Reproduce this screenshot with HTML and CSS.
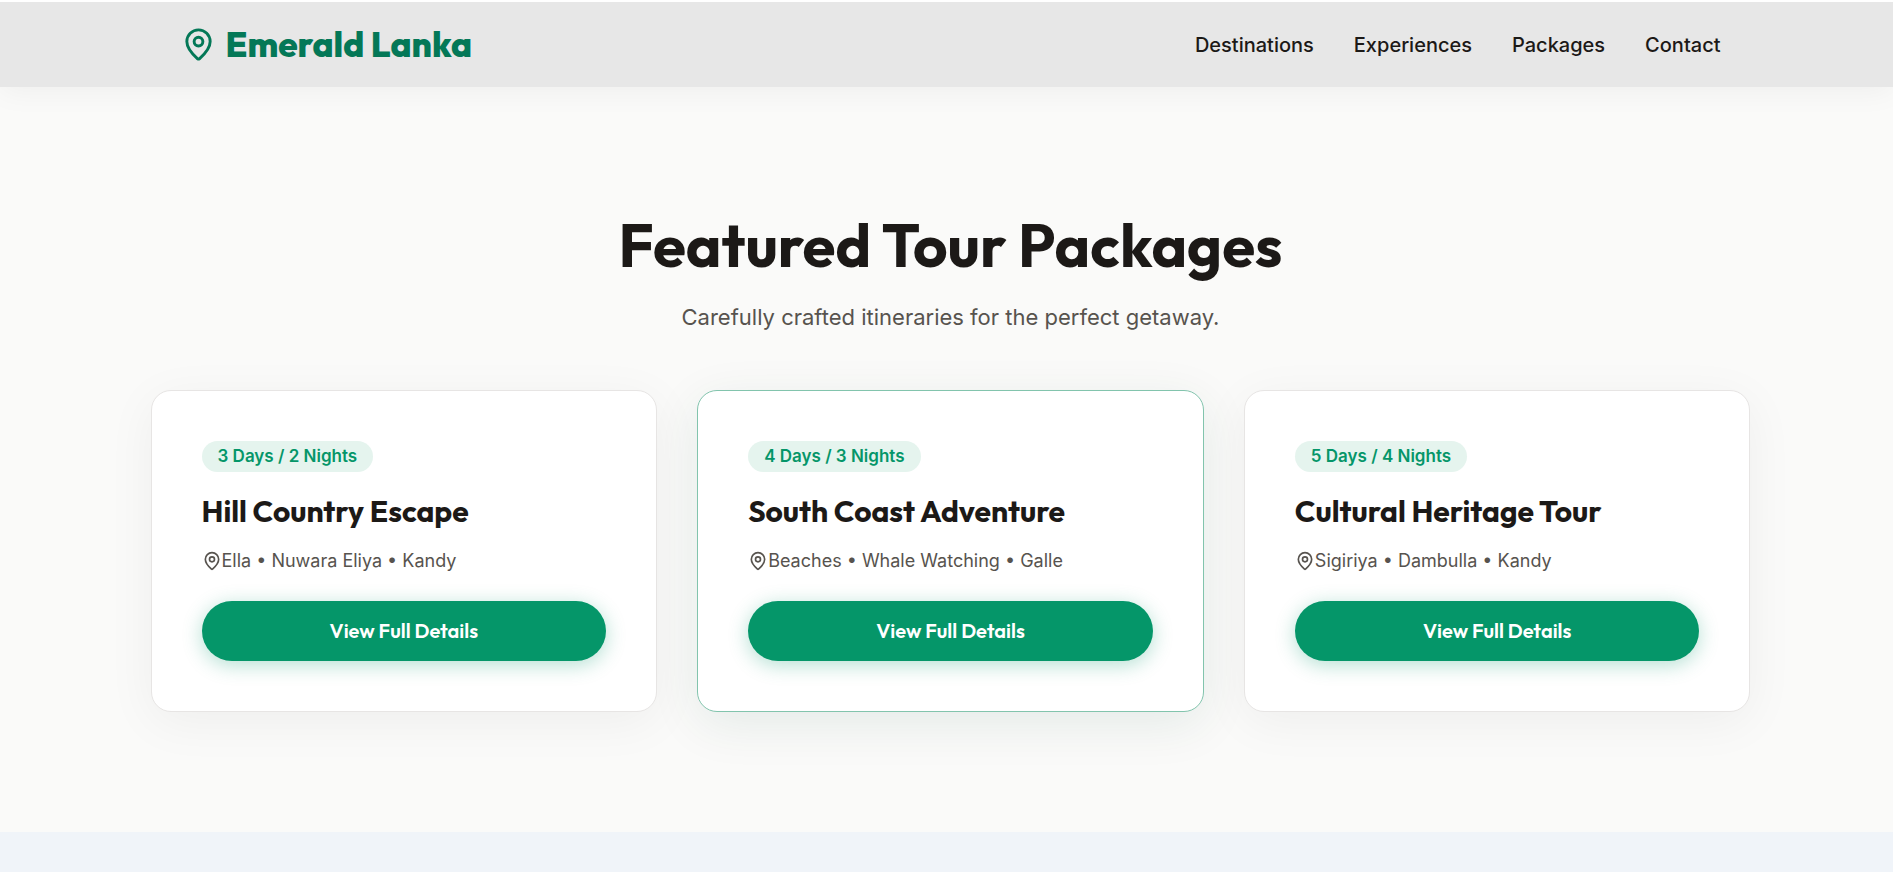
FILE: index.html
```
<!DOCTYPE html>
<html lang="en">
<head>
  <meta charset="UTF-8">
  <meta name="viewport" content="width=device-width, initial-scale=1.0">
  <title>Emerald Lanka</title>
  <link rel="stylesheet" href="styles.css">
</head>
<body>
  <svg class="sprite" aria-hidden="true">
    <symbol id="map-pin" viewBox="0 0 24 24">
      <path d="M20 10c0 4.993-5.539 10.193-7.399 11.799a1 1 0 0 1-1.202 0C9.539 20.193 4 14.993 4 10a8 8 0 0 1 16 0"/>
      <circle cx="12" cy="10" r="3"/>
    </symbol>
  </svg>

  <header class="navbar">
    <div class="container nav-container">
      <a href="#" class="logo">
        <svg class="icon logo-icon" aria-hidden="true"><use href="#map-pin"/></svg>
        <span>Emerald Lanka</span>
      </a>
      <nav class="nav-links">
        <a href="#destinations">Destinations</a>
        <a href="#experiences">Experiences</a>
        <a href="#packages">Packages</a>
        <a href="#contact">Contact</a>
      </nav>
    </div>
  </header>

  <main>
    <section class="section" id="packages">
      <div class="container">
        <div class="section-header">
          <h2>Featured Tour Packages</h2>
          <p>Carefully crafted itineraries for the perfect getaway.</p>
        </div>

        <div class="package-grid">
          <article class="package-card">
            <span class="badge">3 Days / 2 Nights</span>
            <h3>Hill Country Escape</h3>
            <p class="route"><svg class="icon" aria-hidden="true"><use href="#map-pin"/></svg>Ella • Nuwara Eliya • Kandy</p>
            <button type="button" class="btn">View Full Details</button>
          </article>

          <article class="package-card popular">
            <span class="badge">4 Days / 3 Nights</span>
            <h3>South Coast Adventure</h3>
            <p class="route"><svg class="icon" aria-hidden="true"><use href="#map-pin"/></svg>Beaches • Whale Watching • Galle</p>
            <button type="button" class="btn">View Full Details</button>
          </article>

          <article class="package-card">
            <span class="badge">5 Days / 4 Nights</span>
            <h3>Cultural Heritage Tour</h3>
            <p class="route"><svg class="icon" aria-hidden="true"><use href="#map-pin"/></svg>Sigiriya • Dambulla • Kandy</p>
            <button type="button" class="btn">View Full Details</button>
          </article>
        </div>
      </div>
    </section>

    <section class="section-alt" id="contact"></section>
  </main>
</body>
</html>
```

FILE: styles.css
```
:root {
  --primary: #059669;
  --primary-dark: #047857;
  --text: #1c1917;
  --text-light: #57534e;
  --bg: #fafaf9;
  --bg-alt: #f0f4f9;
  --font-heading: "Outfit", "Lato", sans-serif;
  --font-body: "Inter", sans-serif;
}

* {
  box-sizing: border-box;
  margin: 0;
  padding: 0;
}

body {
  display: flex;
  flex-direction: column;
  min-height: 100vh;
  background-color: var(--bg);
  color: var(--text);
  font-family: var(--font-body);
  line-height: 1.6;
}

main {
  display: flex;
  flex: 1;
  flex-direction: column;
}

a {
  color: inherit;
  text-decoration: none;
}

.sprite {
  display: none;
}

.container {
  max-width: 1600px;
  margin: 0 auto;
}

.icon {
  width: 20px;
  height: 20px;
  flex-shrink: 0;
  fill: none;
  stroke: currentColor;
  stroke-width: 2;
  stroke-linecap: round;
  stroke-linejoin: round;
}

/* Navbar */
.navbar {
  padding-left: 8px;
  background-color: #e7e7e7;
  border-top: 2px solid #fff;
  box-shadow: 0 4px 30px rgba(0, 0, 0, 0.05);
}

.nav-container {
  display: flex;
  justify-content: space-between;
  align-items: center;
  padding: 14px 30px;
}

.logo {
  display: flex;
  align-items: center;
  gap: 10px;
  color: var(--primary-dark);
  font-family: var(--font-heading);
  font-size: 35px;
  font-weight: 800;
  line-height: 57px;
}

.logo-icon {
  width: 35px;
  height: 35px;
}

.nav-links {
  display: flex;
  gap: 40px;
  font-size: 20px;
  font-weight: 500;
}

.nav-links a:hover {
  color: var(--primary);
}

/* Sections */
.section {
  padding: 120px 0 120px 8px;
}

.section-alt {
  flex: 1;
  background-color: var(--bg-alt);
}

.section-header {
  margin-bottom: 54px;
  text-align: center;
}

.section-header h2 {
  margin-bottom: 16px;
  font-family: var(--font-heading);
  font-size: 60px;
  font-weight: 700;
  line-height: 76px;
}

.section-header p {
  color: var(--text-light);
  font-size: 22px;
  line-height: 37px;
}

/* Packages */
.package-grid {
  display: grid;
  grid-template-columns: repeat(3, 1fr);
  gap: 40px;
}

.package-card {
  padding: 50px;
  background-color: #fff;
  border: 1px solid #e7e5e4;
  border-radius: 20px;
  box-shadow: 0 10px 50px rgba(0, 0, 0, 0.05);
}

.package-card.popular {
  border-color: #82c4ad;
  box-shadow: 0 12px 50px rgba(4, 80, 60, 0.09);
}

.badge {
  display: block;
  width: fit-content;
  margin-bottom: 20px;
  padding: 0 16px;
  border-radius: 20px;
  background-color: #e5f4ee;
  color: var(--primary);
  font-size: 17px;
  font-weight: 600;
  line-height: 31px;
}

.package-card h3 {
  margin-bottom: 16px;
  font-family: var(--font-heading);
  font-size: 30px;
  font-weight: 700;
  line-height: 38px;
}

.route {
  display: flex;
  align-items: center;
  margin-bottom: 25px;
  color: var(--text-light);
  font-size: 18px;
  line-height: 30px;
}

.btn {
  display: block;
  width: 100%;
  border: none;
  border-radius: 50px;
  background-color: var(--primary);
  box-shadow: 0 4px 20px rgba(5, 150, 105, 0.3);
  color: #fff;
  font-family: var(--font-heading);
  font-size: 20px;
  font-weight: 600;
  line-height: 60px;
  cursor: pointer;
}

.btn:hover {
  background-color: var(--primary-dark);
}

@media (max-width: 1100px) {
  .package-grid {
    grid-template-columns: 1fr;
  }
}
```
